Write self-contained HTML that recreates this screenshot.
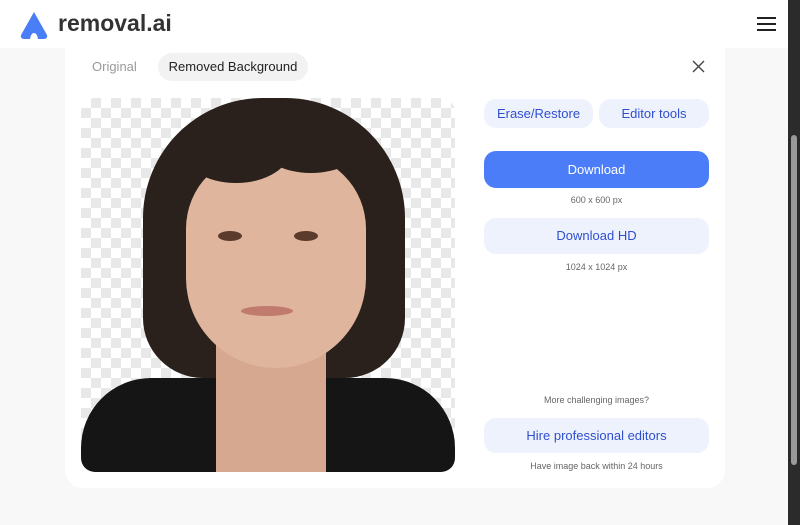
<!DOCTYPE html>
<html><head><meta charset="utf-8"><style>
*{margin:0;padding:0;box-sizing:border-box}
body{width:800px;height:525px;overflow:hidden;background:#f8f8f9;font-family:"Liberation Sans",sans-serif;position:relative}
.hdr{position:absolute;left:0;top:0;width:788px;height:48px;background:#fff}
.sb{position:absolute;left:788px;top:0;width:12px;height:525px;background:#2b2b2b}
.thumb{position:absolute;left:791px;top:135px;width:6px;height:330px;background:#9a9a9a;border-radius:3px}
.card{position:absolute;left:65px;top:40px;width:660px;height:448px;background:#fff;border-radius:0 0 18px 18px}
.btn{position:absolute;border-radius:12px;background:#eef2fd;color:#2f4fd0;font-size:13px;text-align:center}
.sm{position:absolute;font-size:9px;color:#666;text-align:center;width:225px;left:484px}
.photo{position:absolute;left:81px;top:98px;width:374px;height:374px;border-radius:14px;overflow:hidden;
background-color:#fff;background-image:linear-gradient(45deg,#e8e8e8 25%,transparent 25%,transparent 75%,#e8e8e8 75%),linear-gradient(45deg,#e8e8e8 25%,transparent 25%,transparent 75%,#e8e8e8 75%);background-size:20px 20px;background-position:0 0,10px 10px}
</style></head><body>
<div class="hdr">
<svg style="position:absolute;left:17px;top:10px" width="34" height="30" viewBox="0 0 34 30"><path d="M17 2 L4 25 Q3 29 8 29 L13 29 Q14 23 17 23 Q20 23 21 29 L26 29 Q31 29 30 25 Z" fill="#4a7ef7"/></svg>
<div style="position:absolute;left:58px;top:10px;font-size:23px;font-weight:bold;color:#333">removal.ai</div>
<div style="position:absolute;left:757px;top:17px;width:19px;height:2px;background:#222;box-shadow:0 6px 0 #222,0 12px 0 #222"></div>
</div>
<div class="card"></div>
<div style="position:absolute;left:92px;top:59px;font-size:13px;color:#999">Original</div>
<div style="position:absolute;left:158px;top:53px;width:150px;height:28px;border-radius:14px;background:#f2f2f3;font-size:13px;color:#222;text-align:center;line-height:28px">Removed Background</div>
<svg style="position:absolute;left:692px;top:60px" width="13" height="13" viewBox="0 0 13 13"><path d="M1 1L12 12M12 1L1 12" stroke="#444" stroke-width="1.4"/></svg>
<div class="photo">
<div style="position:absolute;left:62px;top:0;width:262px;height:280px;border-radius:120px 120px 60px 60px;background:#2a201c"></div>
<div style="position:absolute;left:0;top:280px;width:374px;height:100px;background:#151515;border-radius:70px 70px 0 0"></div>
<div style="position:absolute;left:135px;top:240px;width:110px;height:140px;background:#d6a890;clip-path:polygon(0 0,100% 0,100% 100%,0 100%)"></div>
<div style="position:absolute;left:105px;top:55px;width:180px;height:215px;border-radius:80px 80px 95px 95px;background:#e0b59d"></div>
<div style="position:absolute;left:100px;top:15px;width:110px;height:70px;border-radius:50%;background:#2a201c"></div>
<div style="position:absolute;left:180px;top:20px;width:100px;height:55px;border-radius:50%;background:#2a201c"></div>
<div style="position:absolute;left:137px;top:133px;width:24px;height:10px;border-radius:50%;background:#5a3b2c"></div>
<div style="position:absolute;left:213px;top:133px;width:24px;height:10px;border-radius:50%;background:#5a3b2c"></div>
<div style="position:absolute;left:160px;top:208px;width:52px;height:10px;border-radius:50%;background:#c07a6e"></div>
</div>
<div class="btn" style="left:484px;top:99px;width:109px;height:29px;line-height:29px">Erase/Restore</div>
<div class="btn" style="left:599px;top:99px;width:110px;height:29px;line-height:29px">Editor tools</div>
<div class="btn" style="left:484px;top:151px;width:225px;height:37px;line-height:37px;background:#4a7df7;color:#fff">Download</div>
<div class="sm" style="top:195px">600 x 600 px</div>
<div class="btn" style="left:484px;top:218px;width:225px;height:36px;line-height:36px">Download HD</div>
<div class="sm" style="top:262px">1024 x 1024 px</div>
<div class="sm" style="top:395px">More challenging images?</div>
<div class="btn" style="left:484px;top:418px;width:225px;height:35px;line-height:35px">Hire professional editors</div>
<div class="sm" style="top:461px">Have image back within 24 hours</div>
<div class="sb"></div><div class="thumb"></div>
</body></html>
